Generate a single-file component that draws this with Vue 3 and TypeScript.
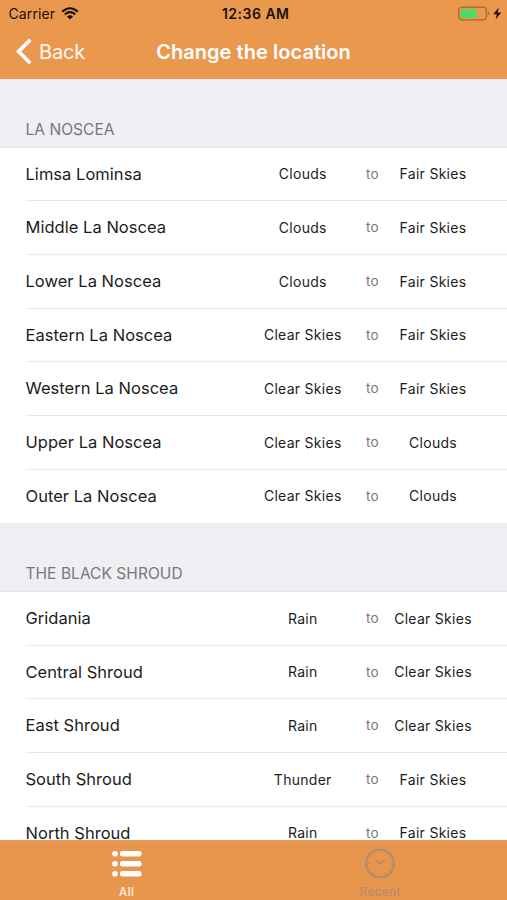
<script setup lang="ts">
interface Place {
  name: string
  from: string
  to: string
}

interface Region {
  title: string
  places: Place[]
}

const place = (name: string, from: string, to: string): Place => ({ name, from, to })

const regions: Region[] = [
  {
    title: 'LA NOSCEA',
    places: [
      place('Limsa Lominsa', 'Clouds', 'Fair Skies'),
      place('Middle La Noscea', 'Clouds', 'Fair Skies'),
      place('Lower La Noscea', 'Clouds', 'Fair Skies'),
      place('Eastern La Noscea', 'Clear Skies', 'Fair Skies'),
      place('Western La Noscea', 'Clear Skies', 'Fair Skies'),
      place('Upper La Noscea', 'Clear Skies', 'Clouds'),
      place('Outer La Noscea', 'Clear Skies', 'Clouds'),
    ],
  },
  {
    title: 'THE BLACK SHROUD',
    places: [
      place('Gridania', 'Rain', 'Clear Skies'),
      place('Central Shroud', 'Rain', 'Clear Skies'),
      place('East Shroud', 'Rain', 'Clear Skies'),
      place('South Shroud', 'Thunder', 'Fair Skies'),
      place('North Shroud', 'Rain', 'Fair Skies'),
    ],
  },
]
</script>

<template>
  <div class="screen">
    <header class="top">
      <div class="status">
        <div class="carrier">
          <span>Carrier</span>
          <svg width="18" height="13" viewBox="0 0 18 13">
            <path d="M1.2 4.7Q9-2.2 16.8 4.7M3.8 7.4Q9 3 14.2 7.4" fill="none" stroke="#17110c" stroke-width="2.1" />
            <path d="M6 9.4Q9 7 12 9.4L9 12.4Z" fill="#17110c" />
          </svg>
        </div>
        <span class="time">12:36 AM</span>
        <div class="power">
          <svg width="45" height="16" viewBox="0 0 45 16">
            <rect x="0.7" y="1.2" width="27.6" height="12.6" rx="3" fill="none" stroke="#a56733" stroke-width="1.2" />
            <rect x="2.4" y="2.9" width="16" height="9.2" rx="1.3" fill="#4cd964" />
            <path d="M29.8 5.3Q32 7.5 29.8 9.7Z" fill="#8a542a" />
            <path d="M40.8 1.5L35.2 8.3H38.8L37.6 13.5L43.2 6.5H39.6Z" fill="#17110c" />
          </svg>
        </div>
      </div>
      <nav class="bar">
        <button class="back" type="button">
          <svg width="17" height="28" viewBox="0 0 17 28">
            <path d="M14.3 1.8L2.6 13.5L14.3 25.2" fill="none" stroke="#fff" stroke-width="3.7" />
          </svg>
          <span>Back</span>
        </button>
        <h1 class="title">Change the location</h1>
      </nav>
    </header>

    <main class="list">
      <section v-for="region in regions" :key="region.title" class="region">
        <h2 class="heading">{{ region.title }}</h2>
        <ul class="rows">
          <li v-for="p in region.places" :key="p.name" class="row">
            <span class="name">{{ p.name }}</span>
            <span class="weather">{{ p.from }}</span>
            <span class="to">to</span>
            <span class="weather">{{ p.to }}</span>
          </li>
        </ul>
      </section>
    </main>

    <footer class="tabs">
      <div class="tab">
        <svg width="32" height="32" viewBox="0 0 32 32" fill="#fff">
          <circle cx="4" cy="5.8" r="2.8" /><rect x="9" y="3.1" width="21.5" height="5.4" rx="2.2" />
          <circle cx="4" cy="15.7" r="2.8" /><rect x="9" y="13" width="21.5" height="5.4" rx="2.2" />
          <circle cx="4" cy="25.7" r="2.8" /><rect x="9" y="23" width="21.5" height="5.4" rx="2.2" />
        </svg>
        <span>All</span>
      </div>
      <div class="tab idle">
        <svg width="32" height="32" viewBox="0 0 32 32" fill="none" stroke="#b58c65">
          <circle cx="16" cy="15.5" r="13.8" stroke-width="2.3" />
          <circle cx="16" cy="15.5" r="10.8" stroke-width="1.5" stroke-dasharray="1.2 4.45" />
          <path d="M12 12.2L16 15.6L20.3 12.6" stroke-width="1.9" />
        </svg>
        <span>Recent</span>
      </div>
    </footer>
  </div>
</template>

<style>
body {
  margin: 0;
}
</style>

<style scoped>
.screen {
  display: flex;
  flex-direction: column;
  height: 900px;
  overflow: hidden;
  background: #efeef3;
  font-family: Inter, "Liberation Sans", sans-serif;
  color: #1c1c1c;
}
.top {
  flex: none;
  height: 79px;
  background: #eb984f;
}
.status {
  display: grid;
  grid-template-columns: 1fr auto 1fr;
  align-items: center;
  height: 27px;
  padding: 0 4px 0 8.5px;
  font-size: 14px;
  color: #17110c;
}
.carrier {
  display: flex;
  align-items: center;
  gap: 6px;
  letter-spacing: 0.1px;
}
.time {
  font-weight: 600;
  letter-spacing: 0.5px;
}
.power {
  display: flex;
  justify-content: flex-end;
}
.bar {
  display: grid;
  grid-template-columns: 1fr auto 1fr;
  align-items: center;
  height: 50px;
  color: #fff;
}
.back {
  display: flex;
  align-items: center;
  gap: 6px;
  padding: 0 0 0 16px;
  border: 0;
  background: none;
  color: #fff8ef;
  font: inherit;
  font-size: 20px;
  letter-spacing: -0.2px;
}
.title {
  margin: 0;
  font-size: 20px;
  font-weight: 600;
  letter-spacing: 0.05px;
}
.list {
  flex: 1;
  min-height: 0;
  overflow: hidden;
}
.heading {
  box-sizing: border-box;
  height: 68.6px;
  margin: 0;
  padding: 41px 0 0 25.5px;
  border-bottom: 1px solid #e5e4e8;
  font-size: 15.5px;
  line-height: 20px;
  letter-spacing: 0.05px;
  font-weight: 400;
  color: #77777c;
}
.rows {
  margin: 0;
  padding: 0;
  list-style: none;
  background: #fff;
}
.row {
  display: grid;
  grid-template-columns: 216.5px 121.5px 18px 103px;
  align-items: center;
  box-sizing: border-box;
  height: 53.7px;
  padding: 0 0 1.6px 25.5px;
  background: linear-gradient(#e9e9eb, #e9e9eb) 26px 100% / 100% 1px no-repeat;
}
.row:last-child {
  background: none;
}
.name {
  font-size: 16.5px;
  letter-spacing: 0.03px;
}
.weather {
  font-size: 14px;
  letter-spacing: 0.28px;
  text-align: center;
}
.to {
  font-size: 13.5px;
  letter-spacing: 0.3px;
  text-align: center;
  color: #77777a;
}
.tabs {
  flex: none;
  box-sizing: border-box;
  display: grid;
  grid-template-columns: 1fr 1fr;
  height: 60px;
  border-top: 1px solid #dda066;
  background: #e8954d;
}
.tab {
  display: flex;
  flex-direction: column;
  align-items: center;
  padding-top: 7px;
  font-size: 11.5px;
  line-height: 14px;
  font-weight: 500;
  letter-spacing: 0.5px;
  color: #fff4e4;
}
.tab span {
  padding-top: 5px;
}
.idle {
  color: #b58c65;
}
</style>
